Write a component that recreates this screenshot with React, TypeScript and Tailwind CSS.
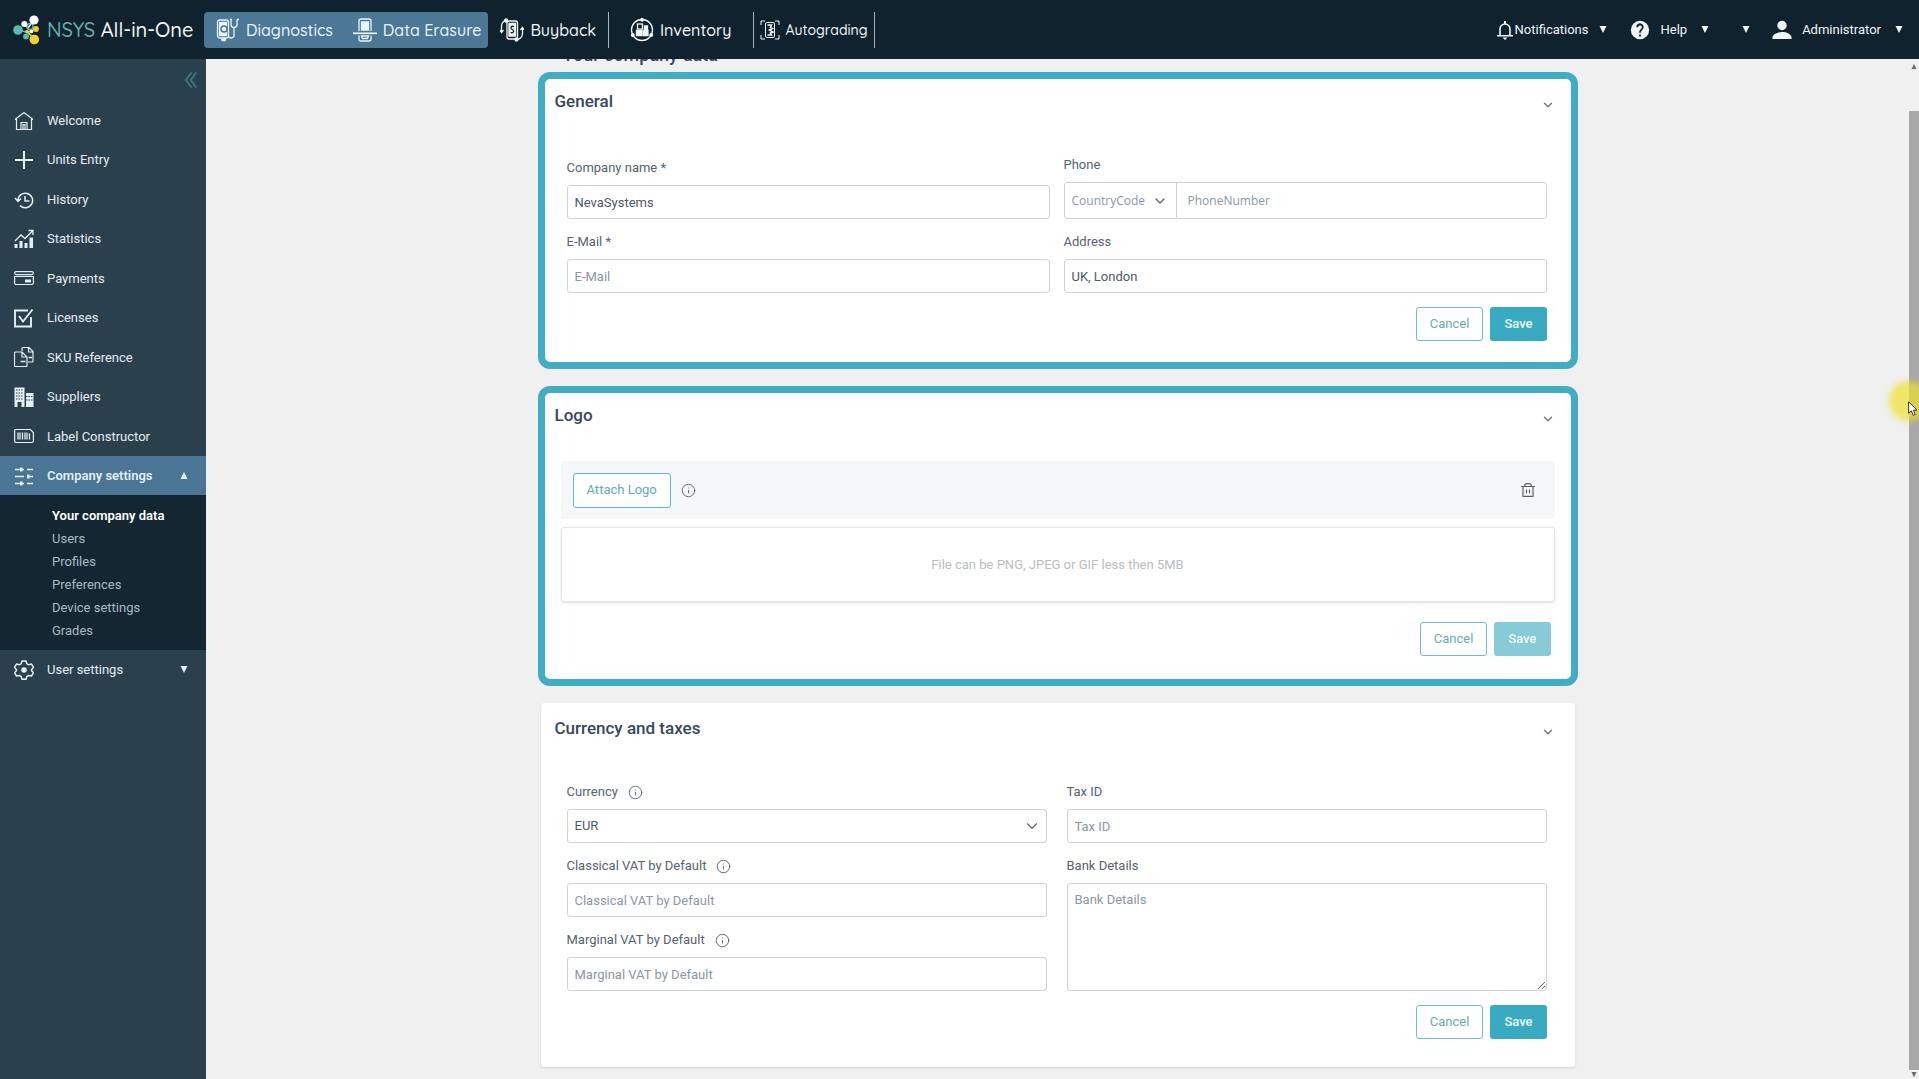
import { clsx } from "clsx";
import { ChevronDown, Info } from "lucide-react";
import React from "react";

/* Icons */
function Caret({ up = false, className }: { up?: boolean; className?: string }) {
  return (
    <svg viewBox="0 0 8 7" className={clsx("h-[7px] w-2 shrink-0 fill-current", up && "rotate-180", className)}>
      <path d="M0.5 0h7L4 7z" />
    </svg>
  );
}

function CollapseIcon() {
  return (
    <svg viewBox="0 0 12 16" className="h-4 w-3" fill="none" stroke="currentColor" strokeWidth="1.5">
      <path d="M6.500 0.500L1 8l5.500 7.500M11.200 0.500L5.700 8l5.500 7.500" />
    </svg>
  );
}

function LogoMark() {
  return (
    <svg viewBox="0 0 26 30" className="h-[30px] w-[26px] shrink-0">
      <g fill="none" strokeWidth="1.4">
        <path d="M5 15l8 2 4 3" stroke="#5fb7b5" />
        <path d="M11 9l4 4 6-8" stroke="#fff" />
        <path d="M21 24l-6-7 8-3" stroke="#f3d02f" />
        <circle cx="17" cy="11.500" r="3" stroke="#5fb7b5" />
      </g>
      <circle cx="21" cy="5" r="4.600" fill="#fff" />
      <circle cx="11.300" cy="9" r="3" fill="#fff" />
      <circle cx="5" cy="15" r="4.800" fill="#5fb7b5" />
      <circle cx="13" cy="21.500" r="2.900" fill="#5fb7b5" />
      <circle cx="21.300" cy="24.500" r="4.800" fill="#f3d02f" />
      <circle cx="23" cy="14" r="2.900" fill="#f3d02f" />
      <circle cx="14" cy="16.500" r="1.800" fill="#f3d02f" />
      <circle cx="18.500" cy="16.500" r="1.800" fill="#fff" />
    </svg>
  );
}

function DiagnosticsIcon() {
  return (
    <svg viewBox="0 0 24 24" className="size-6 shrink-0" fill="none" stroke="currentColor" strokeWidth="1.3">
      <rect x="1.500" y="2" width="11" height="18" rx="2" />
      <path d="M3.500 4.500h7v13h-7z" fill="currentColor" />
      <circle cx="8" cy="11" r="3" stroke="#4c7795" strokeWidth="1.500" />
      <path d="M5 22h5M15 1.500v5a3 3 0 0 0 6 0v-5M18 9.500V16a3 3 0 0 1-5 3M21 1.500h2M14 1.500h2" />
      <circle cx="8" cy="21.500" r="1.300" fill="currentColor" />
    </svg>
  );
}

function ErasureIcon() {
  return (
    <svg viewBox="0 0 24 24" className="size-6 shrink-0" fill="none" stroke="currentColor" strokeWidth="1.3">
      <path d="M6 13V3a2 2 0 0 1 2-2h8a2 2 0 0 1 2 2v10M6 17.500V21a2 2 0 0 0 2 2h8a2 2 0 0 0 2-2v-3.500" />
      <path d="M8.500 4h7v8h-7z" fill="currentColor" />
      <path d="M0 15.300h24" strokeWidth="1.700" />
      <path d="M8.500 18h7l-1 2.500h-5z" />
    </svg>
  );
}

function BuybackIcon() {
  return (
    <svg viewBox="0 0 24 24" className="size-6 shrink-0" fill="none" stroke="currentColor" strokeWidth="1.3">
      <rect x="7" y="3" width="10.500" height="18" rx="2" />
      <path d="M9 5.500h6.500v12.500H9z" fill="currentColor" />
      <path d="M14 8.500c-3-1-4 2-1.700 3s1.400 4-1.800 3" stroke="#10222d" />
      <path d="M1.500 14V8a5.500 5.500 0 0 1 5-5.500M22.500 10v5.500a6 6 0 0 1-6 6" />
      <circle cx="6" cy="2.500" r="1.500" fill="currentColor" />
      <circle cx="16.500" cy="21.500" r="1.500" fill="currentColor" />
      <path d="M0 12l1.500 2.500L3.500 12M20.500 12l2-2.500L24 12" />
    </svg>
  );
}

function InventoryIcon() {
  return (
    <svg viewBox="0 0 24 24" className="size-6 shrink-0" fill="none" stroke="currentColor" strokeWidth="1.3">
      <circle cx="12" cy="12" r="10.500" />
      <rect x="7.500" y="6" width="5" height="5" />
      <path d="M6.500 12.500h5v5h-5zM13 12.500h5v5h-5zM14.500 8h3v3h-3z" fill="currentColor" />
      <circle cx="12" cy="1.800" r="1.300" fill="currentColor" />
      <circle cx="2.800" cy="17" r="1.300" fill="currentColor" />
      <circle cx="21.200" cy="17" r="1.300" fill="currentColor" />
    </svg>
  );
}

function AutogradingIcon() {
  return (
    <svg viewBox="0 0 20 20" className="size-5 shrink-0" fill="none" stroke="currentColor" strokeWidth="1">
      <path d="M1 5V1h4M15 1h4v4M19 15v4h-4M5 19H1v-4" />
      <rect x="5.500" y="2.500" width="9" height="15" rx="1.500" />
      <path d="M7.500 5h4l-1 2.500 2 1-3 1.500 3.500 2-2.500 1 1 2h-4" strokeWidth="1.600" />
    </svg>
  );
}

function BellIcon() {
  return (
    <svg viewBox="0 0 16 20" className="h-5 w-4 shrink-0" fill="none" stroke="currentColor" strokeWidth="1.600">
      <path d="M3 15V9a5 5 0 0 1 10 0v6M0 15.800h16" />
      <path d="M5.500 17.500h5L8 20zM7 1h2v3H7z" fill="currentColor" stroke="none" />
    </svg>
  );
}

function HelpIcon() {
  return (
    <svg viewBox="0 0 24 24" className="size-[22px] shrink-0 fill-current">
      <path d="M12 2a10 10 0 1 0 0 20 10 10 0 0 0 0-20zm1 17h-2v-2h2zm2.070-7.750l-.9.920C13.450 12.900 13 13.500 13 15h-2v-.5c0-1.100.45-2.100 1.170-2.830l1.240-1.260A2 2 0 1 0 10 9H8a4 4 0 1 1 7.070 2.250z" />
    </svg>
  );
}

function PersonIcon() {
  return (
    <svg viewBox="0 0 20 20" className="size-5 shrink-0 fill-current">
      <circle cx="10" cy="5.500" r="4.700" />
      <path d="M0.500 19v-1.500c0-3.500 5-5.500 9.500-5.500s9.500 2 9.500 5.500V19z" />
    </svg>
  );
}

function TrashIcon() {
  return (
    <svg viewBox="0 0 14 14" className="size-[14px]" fill="none" stroke="currentColor" strokeWidth="1.200">
      <path d="M0 3.500h14M2 3.500v9.900h10V3.500M3.500 3.500C3.500 1.500 4.500.6 6 .6h2c1.500 0 2.500.9 2.500 2.900M5.500 6.500v4M8.500 6.500v4" />
    </svg>
  );
}

/* Sidebar drawings share one 20px box */
const MENU_ICONS: Record<string, React.ReactNode> = {
  home: <path d="M1 8.500L10 1.500l9 7M2.500 7.500V18.500h15V7.500M7 18.500v-7h6v7M9 18v-4.500h2V18" />,
  plus: <path d="M10 1v18M1 10h18" strokeWidth="2" />,
  history: <path d="M4 10.500a7.300 7.300 0 1 1 2 5M1 8l3 3.500L7 8.500M11 6v5h4.500" strokeWidth="1.500" />,
  stats: (
    <>
      <path d="M1 12l6-6 4 3.500L18.500 2M14.500 1.500H19V6" strokeWidth="1.300" />
      <path d="M0.500 15h3v4h-3zM5.500 12h3v7h-3zM10.500 14h3v5h-3zM15.500 8.500h3.500V19h-3.500z" fill="currentColor" stroke="none" />
    </>
  ),
  card: (
    <>
      <rect x="0.600" y="3.600" width="18.800" height="3" rx="1.500" />
      <path d="M0.600 8.500h18.800V15a1.500 1.500 0 0 1-1.500 1.500H2.100A1.500 1.500 0 0 1 .6 15z" />
      <path d="M11 11.500h6v3h-6z" fill="currentColor" stroke="none" />
    </>
  ),
  check: <path d="M17 9v9.500H1V2.500h13M5 8l4 5.500L18.500 1.500" strokeWidth="1.900" />,
  sku: (
    <>
      <path d="M8 4V1.500a1 1 0 0 1 1-1h6l4 4V14a1 1 0 0 1-1 1h-4M14.500.5v4.500H19" />
      <path d="M1.500 5H8l5 5v8.500a1 1 0 0 1-1 1H1.500a1 1 0 0 1-1-1V6a1 1 0 0 1 1-1zM8 5v5h5" />
      <path d="M6.500 14.500h5M14.500 10.500H18" strokeWidth="1.600" />
    </>
  ),
  suppliers: (
    <>
      <path d="M0.500 0.500h10V20h-3v-5h-4v5h-3zM12 6h7.500v14H12z" fill="currentColor" stroke="none" />
      <path d="M2 3h7.500M2 6h7.500M2 9h7.500M2 12h7.500M12 9.500h7M12 13h7" stroke="#2b404d" strokeDasharray="1.500 1" />
    </>
  ),
  barcode: (
    <>
      <path d="M1.600 3.500h14.800l3 3V15a1.500 1.500 0 0 1-1.500 1.500H2.100A1.500 1.500 0 0 1 .6 15V4.500a1 1 0 0 1 1-1z" />
      <path d="M4 6.500v7M6 6.500v7M8.500 6.500v7M11 6.500v7M13 6.500v7M15.500 7.500v6" strokeWidth="1.300" />
    </>
  ),
  sliders: (
    <>
      <path d="M1 3.500h9M13 3.500h6M1 10.500h9M13 10.500h6M1 17.500h9M13 17.500h6" strokeWidth="1.500" />
      <path d="M6 1.500h2.500v4H6zM13 8.500h2.500v4H13zM6 15.500h2.500v4H6z" fill="currentColor" stroke="none" />
    </>
  ),
  gear: (
    <>
      <path d="M8 1h4l.8 2.700 2 1.100 2.700-.8 2 3.500-1.900 2v1.200l1.900 2-2 3.400-2.700-.7-2 1.100L12 19.200H8l-.8-2.700-2-1.100-2.700.7-2-3.400 1.900-2V9.500l-1.900-2 2-3.500 2.700.8 2-1.100z" strokeWidth="1.500" strokeLinejoin="round" />
      <circle cx="10" cy="10" r="2.800" fill="currentColor" stroke="none" />
    </>
  ),
};

function MenuIcon({ name }: { name: string }) {
  return (
    <svg viewBox="0 0 20 20" className="size-5 shrink-0" fill="none" stroke="currentColor" strokeWidth="1.200">
      {MENU_ICONS[name]}
    </svg>
  );
}

const MENU = [
  { icon: "home", label: "Welcome" },
  { icon: "plus", label: "Units Entry" },
  { icon: "history", label: "History" },
  { icon: "stats", label: "Statistics" },
  { icon: "card", label: "Payments" },
  { icon: "check", label: "Licenses" },
  { icon: "sku", label: "SKU Reference" },
  { icon: "suppliers", label: "Suppliers" },
  { icon: "barcode", label: "Label Constructor" },
];

const COMPANY_SUBMENU = ["Your company data", "Users", "Profiles", "Preferences", "Device settings", "Grades"];

function Header() {
  return (
    <header className="flex h-[59px] shrink-0 items-center bg-[#10222d] pr-4 pl-[13px] text-[#f0f5f8]">
      {/* Brand */}
      <a href="#" className="flex w-[191px] shrink-0 items-center gap-2 font-[Quicksand,Lato,sans-serif] text-xl font-medium">
        <LogoMark />
        <span className="whitespace-nowrap">
          <span className="text-[#66aaa9]">NSYS</span> All-in-One
        </span>
      </a>

      {/* Products */}
      <nav className="flex h-9 shrink-0 items-stretch font-[Quicksand,Lato,sans-serif] text-base font-medium">
        <div className="flex items-center gap-5 rounded bg-[#4c7795] pr-[7px] pl-3 text-[#e6f4fc]">
          <a href="#" className="flex items-center gap-[6px]">
            <DiagnosticsIcon />
            Diagnostics
          </a>
          <a href="#" className="flex items-center gap-[6px]">
            <ErasureIcon />
            Data Erasure
          </a>
        </div>
        <a href="#" className="flex items-center gap-[6px] border-r border-[#a9b4bb] px-3">
          <BuybackIcon />
          Buyback
        </a>
        <a href="#" className="flex items-center gap-[6px] border-r border-[#a9b4bb] px-[21px]">
          <InventoryIcon />
          Inventory
        </a>
        <a href="#" className="flex items-center gap-[6px] border-r border-[#a9b4bb] px-[6px] text-sm">
          <AutogradingIcon />
          Autograding
        </a>
      </nav>

      {/* Account */}
      <div className="ml-auto flex items-center text-[13px]">
        <button type="button" className="flex items-center gap-[2px]">
          <BellIcon />
          Notifications
          <Caret className="ml-2" />
        </button>
        <button type="button" className="ml-[22px] flex items-center gap-[10px]">
          <HelpIcon />
          Help
          <Caret className="ml-1" />
        </button>
        <button type="button" aria-label="Language" className="ml-[33px]">
          <Caret />
        </button>
        <button type="button" className="ml-[22px] flex items-center gap-[10px]">
          <PersonIcon />
          Administrator
          <Caret className="ml-1" />
        </button>
      </div>
    </header>
  );
}

function SideBar() {
  return (
    <aside className="w-[206px] shrink-0 bg-[#2b404d] text-[13px] text-[#e4edf2]">
      <div className="flex h-[42px] items-center justify-end pr-[9px]">
        <button type="button" aria-label="Collapse menu" className="text-[#3f7f8a]">
          <CollapseIcon />
        </button>
      </div>

      {/* Menu */}
      <ul className="grid h-[355px] auto-rows-fr">
        {MENU.map((item) => (
          <li key={item.label}>
            <a href="#" className="flex h-full items-center gap-[13px] pl-[14px]">
              <MenuIcon name={item.icon} />
              {item.label}
            </a>
          </li>
        ))}
      </ul>

      {/* Company settings */}
      <button type="button" className="flex h-[39px] w-full items-center gap-[13px] bg-[#4b7594] pr-[18px] pl-[14px] font-semibold">
        <MenuIcon name="sliders" />
        Company settings
        <Caret up className="ml-auto" />
      </button>
      <ul className="bg-[#142632] pt-[9px] pb-2 pl-[52px] leading-[23px] text-[#a9bac4]">
        {COMPANY_SUBMENU.map((label, i) => (
          <li key={label}>
            <a href="#" className={clsx(i === 0 && "font-semibold text-white")}>
              {label}
            </a>
          </li>
        ))}
      </ul>

      {/* User settings */}
      <button type="button" className="flex h-[39px] w-full items-center gap-[13px] pr-[18px] pl-[14px]">
        <MenuIcon name="gear" />
        User settings
        <Caret className="ml-auto" />
      </button>
    </aside>
  );
}

const CONTROL = "w-full rounded-[3px] border border-[#cfd3d7] bg-white px-[7px] text-[#4a5a68] outline-none placeholder:text-[#8b97a2] placeholder:opacity-100";

function Field({
  id,
  label,
  info = false,
  className,
  children,
}: {
  id: string;
  label: string;
  info?: boolean;
  className?: string;
  children: React.ReactNode;
}) {
  return (
    <div className={clsx("flex flex-col gap-[7px]", className)}>
      <label htmlFor={id} className="flex h-5 items-center gap-[10px]">
        {label}
        {info && <Info size={15} strokeWidth={1.5} />}
      </label>
      {children}
    </div>
  );
}

function TextField({ id, label, info, value }: { id: string; label: string; info?: boolean; value?: string }) {
  return (
    <Field id={id} label={label} info={info}>
      <input id={id} type="text" defaultValue={value} placeholder={label.replace(" *", "")} className={clsx(CONTROL, "h-[34px]")} />
    </Field>
  );
}

function Card({ title, highlighted = false, children }: { title: string; highlighted?: boolean; children: React.ReactNode }) {
  return (
    <section
      className={clsx(
        "bg-white",
        highlighted ? "rounded-xl border-[7px] border-[#40adc5]" : "mx-[3px] rounded-[3px] px-1 pt-[3px] shadow",
      )}
    >
      <div className="flex h-11 items-center justify-between pt-[2px] pr-4 pl-[10px]">
        <h3 className="text-[17px] font-medium text-[#34495b]">{title}</h3>
        <button type="button" aria-label={"Collapse " + title} className="pt-[6px] text-[#6f7a83]">
          <ChevronDown size={14} strokeWidth={2.5} />
        </button>
      </div>
      {children}
    </section>
  );
}

function FormButtons({ disabled = false }: { disabled?: boolean }) {
  return (
    <div className="flex justify-end gap-[7px]">
      <button type="button" className="h-[34px] rounded-[3px] border border-[#6fbfc9] px-[13px] text-[#6ba9b1]">
        Cancel
      </button>
      <button
        type="button"
        disabled={disabled}
        className="h-[34px] rounded-[3px] bg-[#38aac1] px-[14px] font-medium text-[#eef9fb] disabled:opacity-60"
      >
        Save
      </button>
    </div>
  );
}

function CompanyData() {
  return (
    <main className="min-w-0 flex-1 overflow-hidden bg-[#f0f0f1] text-[13px] text-[#56636f]">
      <div className="mx-auto w-full max-w-[1040px]">
        {/* Page title, scrolled half under the header */}
        <h2 className="-mt-4 mb-[5px] pl-[25px] text-lg leading-6 font-medium text-[#34495b]">Your company data</h2>

        <div className="flex flex-col gap-[17px]">
          <Card title="General" highlighted>
            <form className="pt-8 pr-6 pb-[21px] pl-[22px]">
              <div className="grid grid-cols-2 items-end gap-x-[14px] gap-y-[13px]">
                <TextField id="company" label="Company name *" value="NevaSystems" />
                <Field id="phone" label="Phone" className="gap-[6px]">
                  <div className="flex h-[37px] rounded-[3px] border border-[#cfd3d7] bg-white">
                    <div className="relative w-[112px] shrink-0 border-r border-[#cfd3d7] text-[#8b97a2]">
                      <select
                        aria-label="Country code"
                        className="h-full w-full appearance-none bg-transparent pl-[7px] font-['Open_Sans',sans-serif] text-xs outline-none"
                      >
                        <option>CountryCode</option>
                      </select>
                      <ChevronDown
                        size={16}
                        className="pointer-events-none absolute top-1/2 right-2 -translate-y-1/2 text-[#5f6a73]"
                      />
                    </div>
                    <input
                      id="phone"
                      type="tel"
                      placeholder="PhoneNumber"
                      className="min-w-0 flex-1 bg-transparent px-[11px] font-['Open_Sans',sans-serif] text-xs outline-none placeholder:text-[#8b97a2] placeholder:opacity-100"
                    />
                  </div>
                </Field>
                <TextField id="email" label="E-Mail *" />
                <TextField id="address" label="Address" value="UK, London" />
              </div>
              <div className="pt-[14px]">
                <FormButtons />
              </div>
            </form>
          </Card>

          <Card title="Logo" highlighted>
            <form className="px-4 pt-6 pb-[23px]">
              <div className="flex h-[58px] items-center gap-[10px] rounded-[3px] bg-[#f6f7f8] pr-5 pl-3">
                <button type="button" className="h-[35px] rounded-[3px] border border-[#5cb9c9] bg-white px-[13px] text-[#62abb9]">
                  Attach Logo
                </button>
                <Info size={15} strokeWidth={1.5} />
                <button type="button" aria-label="Delete logo" className="ml-auto">
                  <TrashIcon />
                </button>
              </div>
              <p className="mt-2 flex h-[75px] items-center justify-center rounded-[3px] border border-[#e3e5e7] text-[#b9bdc1] shadow-sm">
                File can be PNG, JPEG or GIF less then 5MB
              </p>
              <div className="pt-5 pr-1">
                <FormButtons disabled />
              </div>
            </form>
          </Card>

          <Card title="Currency and taxes">
            <form className="pt-8 pr-6 pb-7 pl-[22px]">
              <div className="grid grid-cols-2 gap-x-5">
                <div className="flex flex-col gap-[13px]">
                  <Field id="currency" label="Currency" info>
                    <div className="relative">
                      <select id="currency" className={clsx(CONTROL, "h-[34px] appearance-none")}>
                        <option>EUR</option>
                      </select>
                      <ChevronDown
                        size={18}
                        strokeWidth={1.5}
                        className="pointer-events-none absolute top-1/2 right-[6px] -translate-y-1/2"
                      />
                    </div>
                  </Field>
                  <TextField id="classical" label="Classical VAT by Default" info />
                  <TextField id="marginal" label="Marginal VAT by Default" info />
                </div>
                <div className="flex flex-col gap-[13px]">
                  <TextField id="tax" label="Tax ID" />
                  <Field id="bank" label="Bank Details" className="flex-1">
                    <textarea id="bank" placeholder="Bank Details" className={clsx(CONTROL, "flex-1 resize py-2 leading-4")} />
                  </Field>
                </div>
              </div>
              <div className="pt-[14px]">
                <FormButtons />
              </div>
            </form>
          </Card>
        </div>
      </div>
    </main>
  );
}

function ScrollBar() {
  return (
    <div aria-hidden="true" className="relative flex w-[10px] shrink-0 flex-col items-center bg-[#f0f0f1] text-[#6b6b6b]">
      <div className="flex h-[52px] pt-1">
        <Caret up className="scale-75" />
      </div>
      <div className="w-full flex-1 bg-[#a8a8a8]" />
      <div className="flex h-[9px] items-center">
        <Caret className="scale-75" />
      </div>

      {/* Pointer with its click halo */}
      <div className="absolute top-[322px] -left-5 size-10 rounded-full bg-[#f0e02c]/70 blur-[3px]" />
      <svg viewBox="0 0 10 15" className="absolute top-[342px] -left-px h-[15px] w-[10px]" fill="#fff" stroke="#333" strokeWidth="1">
        <path d="M0.600 0.800v11.500l2.700-2.500 2 4.500 2-.9-2-4.300h3.700z" />
      </svg>
    </div>
  );
}

export default function App() {
  return (
    <div className="flex h-screen flex-col overflow-hidden font-[Roboto,sans-serif]">
      <Header />
      <div className="flex min-h-0 flex-1">
        <SideBar />
        <CompanyData />
        <ScrollBar />
      </div>
    </div>
  );
}
